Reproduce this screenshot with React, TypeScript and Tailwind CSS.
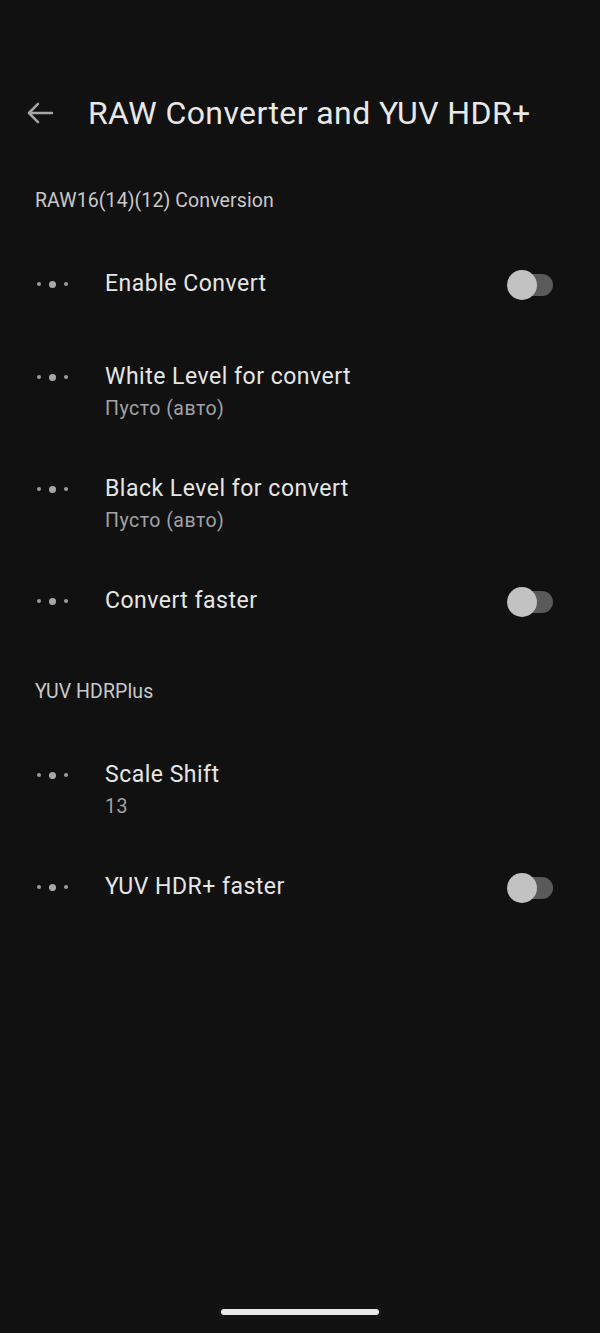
import React from "react";

/* --- ICONS --- */
const BackArrow = () => (
    <svg width="32" height="32" viewBox="0 0 24 24" fill="none" stroke="#a6a6a6" strokeWidth="1.9" strokeLinecap="round" strokeLinejoin="round">
        <path d="M21 12H4" />
        <path d="M10.5 5.2 3.7 12l6.8 6.8" />
    </svg>
);

const Dots = () => (
    <div className="w-[70px] h-8 flex items-center shrink-0">
        <div className="w-[4px] h-[4px] rounded-full bg-[#9c9c9c] ml-[37px]" />
        <div className="w-[7px] h-[7px] rounded-full bg-[#a8a8a8] ml-[8px]" />
        <div className="w-[4px] h-[4px] rounded-full bg-[#9c9c9c] ml-[8px]" />
    </div>
);

const Toggle = () => (
    <div className="relative w-[44px] h-[22px] rounded-full bg-[#5a5a5a] shrink-0">
        <div className="absolute -left-[2px] -top-[4px] w-[30px] h-[30px] rounded-full bg-[#c2c2c2]" />
    </div>
);

interface Row { title: string; sub?: string; toggle?: boolean; h: string; }

const SectionHeader = ({ label, cls }: { label: string; cls: string }) => (
    <div className={`${cls} px-[35px]`}>
        <div className="h-7 leading-7 text-[19.5px] text-[#c9c9c9] tracking-[0.1px]">{label}</div>
    </div>
);

const PrefRow = ({ r }: { r: Row }) => (
    <div className={`${r.h} flex items-start pt-[25px] pr-[47px]`}>
        <Dots />
        <div className="flex-1 pl-[35px]">
            <div className="h-8 leading-8 text-[23px] tracking-[0.5px] text-[#e6e6e6]">{r.title}</div>
            {r.sub && <div className="h-8 leading-8 text-[19.5px] tracking-[0.5px] text-[#a3a3a3]">{r.sub}</div>}
        </div>
        {r.toggle && (
            <div className="h-8 flex items-center pt-[1px]">
                <Toggle />
            </div>
        )}
    </div>
);

const rawRows: Row[] = [
    { title: "Enable Convert", toggle: true, h: "h-[93px]" },
    { title: "White Level for convert", sub: "Пусто (авто)", h: "h-[112px]" },
    { title: "Black Level for convert", sub: "Пусто (авто)", h: "h-[112px]" },
    { title: "Convert faster", toggle: true, h: "h-[80px]" },
];

const yuvRows: Row[] = [
    { title: "Scale Shift", sub: "13", h: "h-[112px]" },
    { title: "YUV HDR+ faster", toggle: true, h: "h-[80px]" },
];

/* --- MAIN PAGE --- */
export default function App() {
    return (
        <div className="w-[600px] h-[1333px] bg-[#111111] flex flex-col font-['Roboto','Noto_Sans',sans-serif]">
            {/* App bar */}
            <header className="h-[160px] pt-[93px] shrink-0">
                <div className="h-10 flex items-center">
                    <div className="w-[88px] pl-[24px] flex items-center">
                        <BackArrow />
                    </div>
                    <h1 className="text-[32px] leading-10 tracking-[0.4px] text-[#e8e8e8]">RAW Converter and YUV HDR+</h1>
                </div>
            </header>

            <SectionHeader label="RAW16(14)(12) Conversion" cls="h-[83px] pt-[27px]" />
            {rawRows.map(r => <PrefRow key={r.title} r={r} />)}

            <SectionHeader label="YUV HDRPlus" cls="h-[94px] pt-[38px]" />
            {yuvRows.map(r => <PrefRow key={r.title} r={r} />)}

            <div className="flex-1" />

            {/* Gesture bar */}
            <div className="h-[24px] flex justify-center shrink-0">
                <div className="w-[158px] h-[6px] rounded-full bg-[#e8e8e8]" />
            </div>
        </div>
    );
}
